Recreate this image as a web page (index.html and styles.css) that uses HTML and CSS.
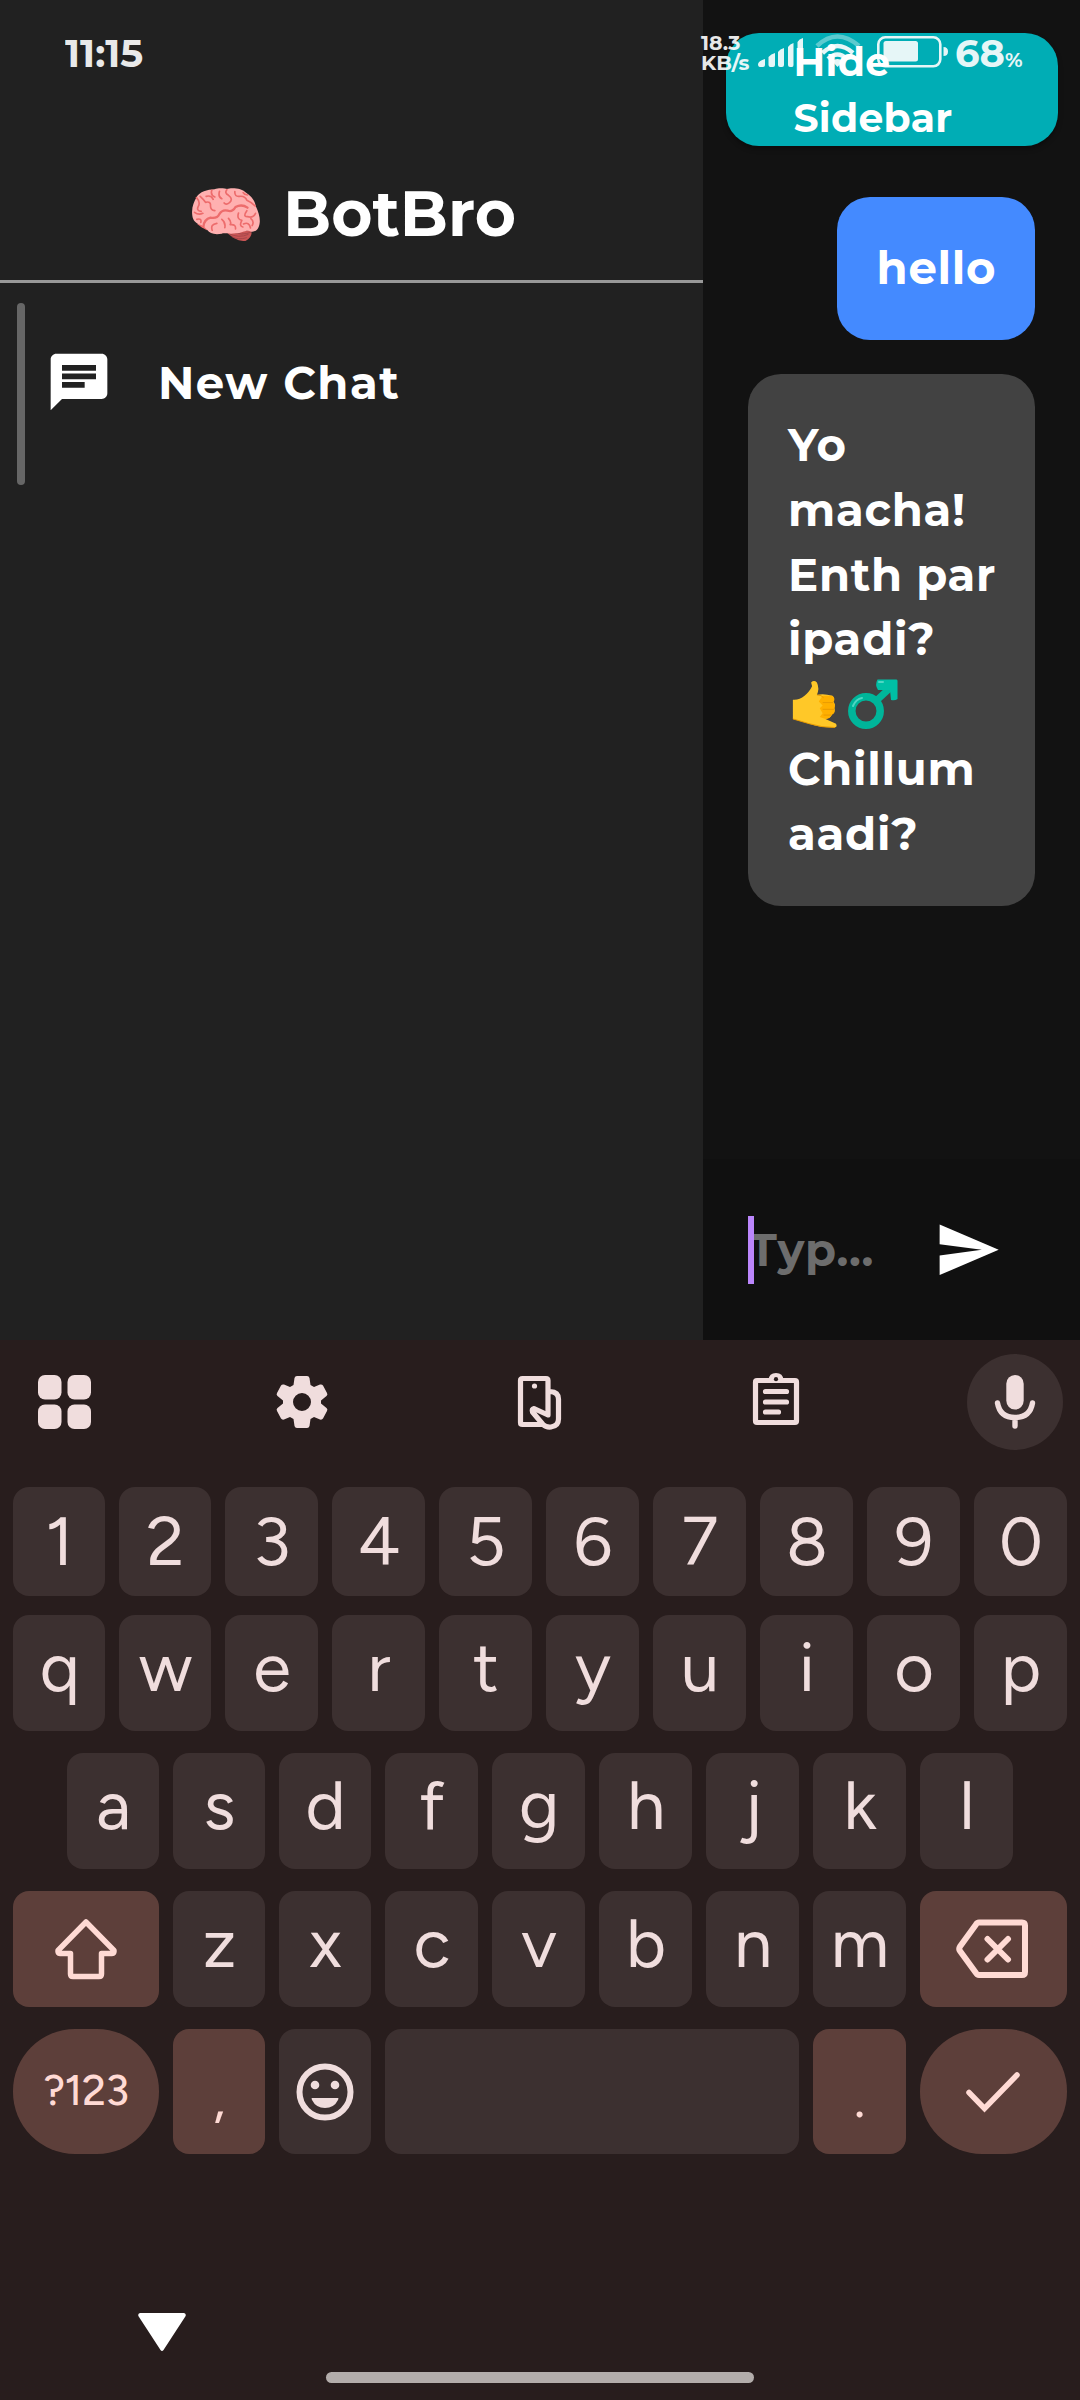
FILE: index.html
```html
<!DOCTYPE html>
<html lang="en">
<head>
<meta charset="utf-8">
<title>BotBro</title>
<link rel="stylesheet" href="styles.css">
</head>
<body>
<div class="screen">
  <main class="app">
    <aside class="sidebar">
      <header class="brand">
        <svg class="brain" viewBox="36 51 203 159" role="img" aria-label="brain">
          <path fill="#ca5555" d="M135 180L212 178Q220 196 196 210Q166 212 135 180Z"/>
          <g fill="none" stroke="#9e4548" stroke-width="2.5"><path d="M144 187Q176 203 205 190M156 181Q184 196 214 183M155 197Q174 208 200 200"/></g>
          <path fill="#f06d6d" d="M50 158L82 160L80 178L64 169Z"/>
          <path fill="#ffb0b0" d="M36 130C34 108 42 92 49 79C58 62 82 56 103 55C119 49 137 54 140 54C154 49 185 51 199 66C216 78 224 90 227 106C234 120 239 137 239 151C238 170 230 184 213 182C198 174 187 187 166 187C148 190 131 185 125 188C103 192 88 187 82 178C76 171 69 163 56 160C43 154 37 145 36 130Z"/>
          <g fill="none" stroke="#ed6c6c" stroke-width="5" stroke-linecap="round" stroke-linejoin="round">
            <path stroke-width="7" d="M70 166Q72 145 91 140Q112 143 117 130Q126 115 142 119Q157 124 166 108Q185 98 202 110"/>
            <path d="M49 80Q62 94 54 107Q48 119 63 121M60 76Q70 85 76 94Q92 90 91 103Q90 117 104 119M78 76Q94 72 99 85M95 58Q90 72 104 78M118 61Q113 78 125 83M140 56Q132 66 145 73Q160 84 148 95Q137 103 132 96M164 62Q163 78 178 76Q195 74 200 88Q216 95 225 105M189 65Q192 71 202 72M43 124Q55 133 68 127M50 145Q65 141 62 154M96 178Q90 160 110 157M125 145Q137 154 134 170M145 142Q155 153 150 161Q168 159 166 174M175 126Q169 145 185 148Q176 165 188 168M200 119Q187 138 202 137Q219 142 226 127M212 143Q223 151 216 164M190 159Q207 151 211 171"/>
          </g>
        </svg>
        <h1 class="brand-name">BotBro</h1>
      </header>
      <nav class="chats">
        <span class="scrollbar"></span>
        <a class="chat-item">
          <svg class="chat-icon" viewBox="0 0 24 24"><path fill="#fff" d="M20 2H4c-1.100 0-1.990.9-1.990 2L2 22l4-4h14c1.100 0 2-.9 2-2V4c0-1.100-.9-2-2-2zM6 9h12v2H6V9zm8 5H6v-2h8v2zm4-6H6V6h12v2z"/></svg>
          <span class="chat-label">New Chat</span>
        </a>
      </nav>
    </aside>

    <section class="chat">
      <button class="toggle">Hide<br>Sidebar</button>
      <div class="messages">
        <div class="bubble user">hello</div>
        <div class="bubble bot">Yo<br>macha!<br>Enth par<br>ipadi?<br>
          <span class="emojis">
            <svg viewBox="0 0 50 52" width="48" height="51" role="img" aria-label="call me">
              <path fill="#ffc828" d="M3 21C11 22 19 15 23 7L22 3Q25 0 28 3Q31 9 28 16Q35 14 44 17Q47 19 45 23Q48 26 46 29Q48 33 44 36Q43 40 37 41L48 46Q50 50 45 50Q32 50 20 46L3 41Z"/>
              <path fill="#ffb000" d="M34 17L44 17Q48 20 45 24Q48 27 46 31Q48 35 43 37Q42 41 37 41L31 39L34 35L31 30L34 27L30 23Z"/>
              <path fill="none" stroke="#e89a00" stroke-width="1" d="M28 16Q33 16 35 19M34 24H45M34 31H46M35 37H43M3 41L20 46Q33 50 47 50"/>
            </svg>
            <svg viewBox="0 0 50 51" width="50" height="51" role="img" aria-label="male">
              <g fill="none" stroke="#00b59a"><circle cx="18" cy="32" r="14.200" stroke-width="7.500"/><path stroke-width="7" d="M28 22L42 9"/></g>
              <path fill="#00bfa5" d="M29.500 .5H48.500Q49.500 .5 49.500 2V20Q47 22 43 21L42 11H30Q26.500 6 29.500 .5Z"/>
              <path fill="none" stroke="#4fd6c3" stroke-width="2" stroke-linecap="round" d="M5 27Q8 20 14 19M31 3H35"/>
            </svg>
          </span>
          Chillum<br>aadi?</div>
      </div>
      <form class="composer">
        <span class="caret"></span>
        <span class="placeholder">Typ...</span>
        <svg class="send" viewBox="0 0 24 24"><path fill="#fff" d="M2.010 21L23 12 2.010 3 2 10l15 2-15 2z"/></svg>
      </form>
    </section>
  </main>

  <section class="keyboard">
    <div class="tools">
      <span class="tool"><svg width="53" height="54" viewBox="0 0 53 54" fill="#f0dddd"><rect width="23.500" height="24.500" rx="7"/><rect x="29.500" width="23.500" height="24.500" rx="7"/><rect y="29.500" width="23.500" height="24.500" rx="7"/><rect x="29.500" y="29.500" width="23.500" height="24.500" rx="7"/></svg></span>
      <span class="tool"><svg width="52" height="54" viewBox="0 0 52 54"><path fill="#f0dddd" fill-rule="evenodd" d="M21 1H31Q33 1 33.500 3L34.500 10L38 12L44 9.500Q46 9 47 10.500L51 18Q52 20 50.500 21L45 25.500V28.500L50.500 33Q52 34 51 36L47 43.500Q46 45 44 44.500L38 42L34.500 44L33.500 51Q33 53 31 53H21Q19 53 18.500 51L17.500 44L14 42L8 44.500Q6 45 5 43.500L1 36Q0 34 1.500 33L7 28.500V25.500L1.500 21Q0 20 1 18L5 10.500Q6 9 8 9.500L14 12L17.500 10L18.500 3Q19 1 21 1ZM26 18A9 9 0 1 0 26 36A9 9 0 1 0 26 18Z"/></svg></span>
      <span class="tool one-hand"><svg width="46" height="56" viewBox="0 0 46 56" fill="none" stroke="#f0dddd" stroke-width="5.200" stroke-linejoin="round"><path d="M26 49.500H5.500Q3.500 49.500 3.500 47.500V5.500Q3.500 3.500 5.500 3.500H29Q31 3.500 31 5.500V40L17 33.500Q14.500 34 15.500 37L26 49.500Q29 52.500 34 52Q41.500 51 41.500 44V24Q41.500 17 33 16.500"/><circle cx="17.500" cy="11" r="2.600" fill="#f0dddd" stroke="none"/></svg></span>
      <span class="tool clipboard"><svg width="48" height="56" viewBox="0 0 48 56" fill="none" stroke="#f0dddd" stroke-width="5.200" stroke-linecap="round"><path d="M5 9.500H43Q44.500 9.500 44.500 11V50Q44.500 51.500 43 51.500H5Q3.500 51.500 3.500 50V11Q3.500 9.500 5 9.500Z"/><path fill="#f0dddd" stroke="none" d="M16.500 9Q17 2 24 2Q31 2 31.500 9Z"/><circle cx="24" cy="8.200" r="2.100" fill="#281d1d" stroke="none"/><path d="M13.500 20.500H34.500M13.500 31H34.500M13.500 41H26.500"/></svg></span>
      <span class="tool mic"><svg width="42" height="56" viewBox="0 0 42 56" fill="none" stroke="#f0dddd" stroke-width="5.400" stroke-linecap="round"><rect x="12.300" y="1" width="17.400" height="34.500" rx="8.700" fill="#f0dddd" stroke="none"/><path d="M3.500 29Q6 43.500 21 43.500Q36 43.500 38.500 29M21 44V52"/></svg></span>
    </div>

    <div class="row numbers"><kbd>1</kbd><kbd>2</kbd><kbd>3</kbd><kbd>4</kbd><kbd>5</kbd><kbd>6</kbd><kbd>7</kbd><kbd>8</kbd><kbd>9</kbd><kbd>0</kbd></div>
    <div class="row"><kbd>q</kbd><kbd>w</kbd><kbd>e</kbd><kbd>r</kbd><kbd>t</kbd><kbd>y</kbd><kbd>u</kbd><kbd>i</kbd><kbd>o</kbd><kbd>p</kbd></div>
    <div class="row middle"><kbd>a</kbd><kbd>s</kbd><kbd>d</kbd><kbd>f</kbd><kbd>g</kbd><kbd>h</kbd><kbd>j</kbd><kbd>k</kbd><kbd>l</kbd></div>
    <div class="row lower">
      <kbd class="wide accent icon"><svg width="66" height="66" viewBox="0 0 66 66" fill="none" stroke="#ffdad4" stroke-width="5.500"><path stroke-linejoin="round" d="M33 6L61 34.500Q61.500 37.500 59 37.500H48.500V58Q48.500 60.500 46 60.500H20Q17.500 60.500 17.500 58V37.500H7Q4.500 37.500 5 34.500Z"/></svg></kbd>
      <kbd>z</kbd><kbd>x</kbd><kbd>c</kbd><kbd>v</kbd><kbd>b</kbd><kbd>n</kbd><kbd>m</kbd>
      <kbd class="wide accent icon backspace"><svg width="74" height="62" viewBox="0 0 74 62" fill="none" stroke="#ffdad4" stroke-width="6" stroke-linejoin="round" stroke-linecap="round"><path d="M24 4.500H67Q70 4.500 70 7.500V54Q70 57 67 57H24Q22 57 21 55L5 33Q3.500 31 5 28.500L21 6.500Q22 4.500 24 4.500ZM32.500 21L53 41.500M53 21L32.500 41.500"/></svg></kbd>
    </div>
    <div class="row lower bottom">
      <kbd class="wide accent round sym">?123</kbd>
      <kbd class="accent punct">,</kbd>
      <kbd class="icon"><svg width="58" height="58" viewBox="0 0 58 58"><circle cx="29" cy="29" r="25.500" fill="none" stroke="#f0dddd" stroke-width="6"/><g fill="#f0dddd"><circle cx="19" cy="22" r="4.300"/><circle cx="39" cy="22" r="4.300"/><path d="M16 35H42Q43 35 42 37Q38 45 29 45Q20 45 16 37Q15 35 16 35Z"/></g></svg></kbd>
      <kbd class="space"></kbd>
      <kbd class="accent punct">.</kbd>
      <kbd class="wide accent round icon"><svg width="56" height="42" viewBox="0 0 56 42" fill="none" stroke="#ffdad4" stroke-width="5.500" stroke-linecap="round" stroke-linejoin="miter"><path d="M4 21.500L19.500 37.500L52 4"/></svg></kbd>
    </div>

    <footer class="nav">
      <svg class="nav-down" width="48" height="39" viewBox="0 0 48 39"><path fill="#fff" d="M2 0H46Q49 1 47 4L25.500 37Q24 39 22.500 37L1 4Q-1 1 2 0Z"/></svg>
      <span class="home"></span>
    </footer>
  </section>

  <div class="status">
    <span class="time">11:15</span>
    <span class="speed">18.3<br>KB/s</span>
    <svg class="signal" width="46" height="29" viewBox="0 0 46 29" fill="#fff"><path d="M0 26Q1 23 7 21V27Q7 29 5 29H2Q0 29 0 26ZM10.500 19Q13 16 17 15V27Q17 29 15 29H12.500Q10.500 29 10.500 27ZM20 14Q22 11 26 10V27Q26 29 24 29H22Q20 29 20 27ZM30 9Q32 6 35.500 5V27Q35.500 29 34 29H32Q30 29 30 27ZM39.500 4Q41 1 45 0V27Q45 29 43 29H41.500Q39.500 29 39.500 27Z"/></svg>
    <svg class="wifi" width="46" height="34" viewBox="0 0 46 34" fill="none" stroke="#fff" stroke-width="4.500"><path stroke-opacity=".4" d="M2 12Q22 -7 44 12"/><path d="M7.500 19Q22.500 5 38 19"/><path d="M13 25Q22.500 16 32 25"/><path fill="#fff" stroke="none" d="M17 27Q22.500 23 28 27L22.500 33Z"/></svg>
    <svg class="battery" width="72" height="32" viewBox="0 0 72 32"><rect x="1.300" y="1.300" width="62" height="29" rx="7" fill="none" stroke="#fff" stroke-width="2.600"/><rect x="6.500" y="5" width="34.500" height="20.500" rx="2.500" fill="#fff"/><path fill="#fff" d="M66.500 11Q71 11 71 15.500Q71 20 66.500 20Z"/></svg>
    <span class="percent">68<small>%</small></span>
  </div>
</div>
</body>
</html>
```
FILE: styles.css
```css
* { box-sizing: border-box; }

body {
  margin: 0;
  background: #121212;
  color: #fff;
  font-family: Montserrat, Inter, sans-serif;
  font-weight: 700;
}

svg { display: block; flex: none; }

.screen {
  position: relative;
  display: flex;
  flex-direction: column;
  width: 1080px;
  height: 2400px;
  overflow: hidden;
}

.app { display: flex; height: 1340px; }

/* Sidebar */
.sidebar { width: 703px; background: #212121; }

.brand {
  display: flex;
  align-items: center;
  gap: 23px;
  height: 283px;
  padding: 174px 0 26px 192px;
  border-bottom: 3px solid #999;
}
.brain { width: 68px; height: 53px; }
.brand-name {
  margin: 0;
  font-size: 63px;
  line-height: 80px;
}

.chats { display: flex; padding: 20px 17px; }
.scrollbar { width: 8px; height: 182px; border-radius: 4px; background: #666; }
.chat-item {
  display: flex;
  align-items: flex-start;
  padding: 45px 0 0 20px;
}
.chat-icon { width: 68px; height: 68px; }
.chat-label {
  margin-left: 45px;
  padding-top: 2px;
  font-size: 45px;
  line-height: 66px;
  letter-spacing: 1.500px;
}

/* Conversation */
.chat {
  display: flex;
  flex-direction: column;
  width: 377px;
  padding-top: 33px;
}
.toggle {
  width: 332px;
  height: 113px;
  margin-left: 22.500px;
  padding: 0 0 0 68px;
  border: 0;
  border-radius: 33px;
  background: #00adb5;
  box-shadow: 0 3px 5px rgba(0, 0, 0, .35);
  color: #fff;
  font: inherit;
  font-size: 39.300px;
  line-height: 56px;
  letter-spacing: .3px;
  text-align: left;
}
.messages {
  display: flex;
  flex: 1;
  flex-direction: column;
  align-items: flex-end;
  gap: 34px;
  padding: 51px 45px 0;
}
.bubble {
  padding: 39px 40px 39.600px;
  border-radius: 33px;
  font-size: 45px;
  line-height: 64.700px;
  letter-spacing: .7px;
  white-space: nowrap;
}
.user { width: 198.500px; background: #448aff; }
.bot { width: 287px; background: #424242; }
.emojis {
  display: flex;
  align-items: center;
  gap: 10px;
  height: 64.700px;
  padding-left: 2px;
}
.composer {
  display: flex;
  align-items: center;
  height: 181px;
  margin: 0;
  padding-left: 45px;
  background: #101010;
}
.caret { z-index: 1; width: 6px; height: 68px; background: #bb86fc; }
.placeholder {
  width: 185px;
  margin-left: -5px;
  color: #6d6d6d;
  font-size: 45px;
  letter-spacing: .7px;
  line-height: 66px;
}
.send { width: 67.500px; height: 67.500px; }

/* Keyboard */
.keyboard {
  height: 1060px;
  background: #281d1d;
  color: #f0dddd;
  font-family: "Google Sans", "Product Sans", Figtree, Roboto, sans-serif;
  font-weight: 400;
}
.tools {
  display: flex;
  align-items: center;
  justify-content: space-between;
  height: 124px;
  margin-bottom: 23px;
  padding: 0 17px 0 16px;
}
.tool {
  display: grid;
  place-items: center;
  width: 96px;
  height: 96px;
}
.one-hand { padding: 2px 0 0 1px; }
.clipboard { padding: 0 2px 7px 0; }
.mic { border-radius: 48px; background: #3c3030; }

.row {
  display: flex;
  gap: 14px;
  height: 116px;
  margin-bottom: 22px;
  padding: 0 13px;
}
kbd {
  display: flex;
  flex: 0 0 93px;
  align-items: center;
  justify-content: center;
  padding: 0 0 12px 1px;
  border-radius: 16px;
  background: #3c3030;
  font-family: inherit;
  font-size: 68.500px;
}
kbd:nth-child(-n+2),
.middle kbd:nth-child(3),
.lower kbd:nth-child(3) { flex-basis: 92px; }
.numbers { height: 109px; margin-bottom: 19px; }
.numbers kbd { padding-bottom: 1px; }
.middle { padding: 0 67px; }
.lower .wide { flex-basis: 147px; }
.lower .wide:first-child { flex-basis: 146px; }
.accent { background: #5d3f3a; color: #ffdad4; }
.icon { padding: 0; }
.backspace { padding-right: 3px; }
.bottom { height: 125px; }
.bottom .space { flex-basis: 414px; }
.bottom .round { border-radius: 62px; }
.bottom .sym { padding: 0 0 2px; font-size: 42.500px; font-weight: 550; letter-spacing: -.3px; }
.bottom .punct { padding: 14px 0 0; font-size: 54px; }
.bottom .icon { padding-right: 1px; }

.nav { height: 224px; padding-top: 137px; }
.nav-down { margin-left: 138px; }
.home {
  display: block;
  width: 428px;
  height: 11px;
  margin: 20px auto 0;
  border-radius: 6px;
  background: #b3adab;
}

/* System status bar, drawn over the app */
.status {
  position: absolute;
  inset: 0 0 auto;
  display: flex;
  align-items: flex-start;
  height: 80px;
  padding: 30px 0 0 65px;
  opacity: .9;
}
.time { width: 636px; font-size: 38.500px; line-height: 48px; }
.speed { width: 57px; padding-top: 3px; font-size: 20.500px; line-height: 20px; }
.signal { margin-top: 8px; }
.wifi { margin: 4px 0 0 11px; }
.battery { margin: 6px 0 0 16px; }
.percent { margin-left: 6px; font-size: 38.500px; line-height: 48px; }
.percent small { font-size: 20px; }
```
